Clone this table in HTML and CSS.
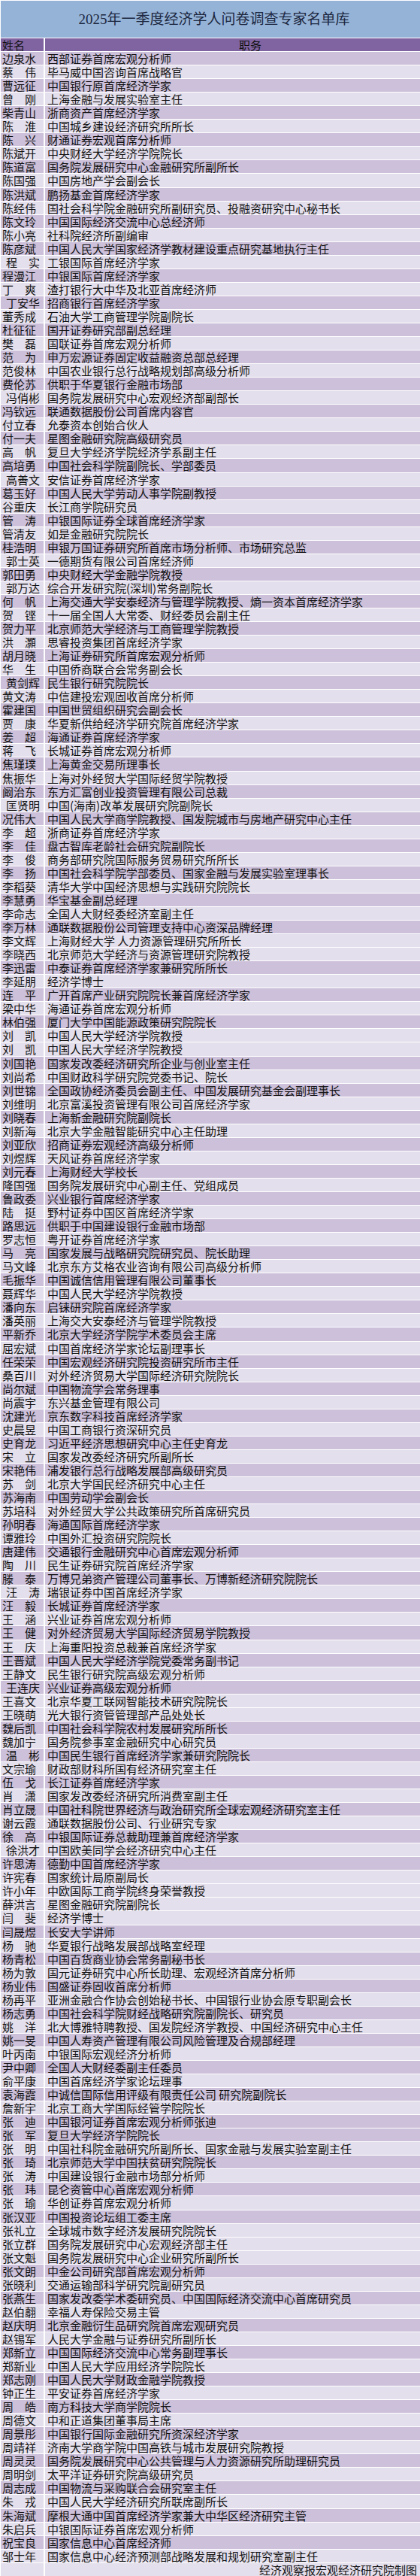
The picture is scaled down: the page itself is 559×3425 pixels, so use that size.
FILE: index.html
```html
<!DOCTYPE html>
<html lang="zh-CN">
<head>
<meta charset="utf-8">
<title>2025年一季度经济学人问卷调查专家名单库</title>
<link rel="stylesheet" href="styles.css">
</head>
<body>
<div class="sheet">
<div class="title">2025年一季度经济学人问卷调查专家名单库</div>
<div class="row head"><div class="name">姓名</div><div class="job jobhead">职务</div></div>
<div class="row d"><div class="name">边泉水</div><div class="job">西部证券首席宏观分析师</div></div>
<div class="row l"><div class="name">蔡　伟</div><div class="job">毕马威中国咨询首席战略官</div></div>
<div class="row d"><div class="name">曹远征</div><div class="job">中国银行原首席经济学家</div></div>
<div class="row l"><div class="name">曾　刚</div><div class="job">上海金融与发展实验室主任</div></div>
<div class="row d"><div class="name">柴青山</div><div class="job">浙商资产首席经济学家</div></div>
<div class="row l"><div class="name">陈　淮</div><div class="job">中国城乡建设经济研究所所长</div></div>
<div class="row d"><div class="name">陈　兴</div><div class="job">财通证券宏观首席分析师</div></div>
<div class="row l"><div class="name">陈斌开</div><div class="job">中央财经大学经济学院院长</div></div>
<div class="row d"><div class="name">陈道富</div><div class="job">国务院发展研究中心金融研究所副所长</div></div>
<div class="row l"><div class="name">陈国强</div><div class="job">中国房地产学会副会长</div></div>
<div class="row d"><div class="name">陈洪斌</div><div class="job">鹏扬基金首席经济学家</div></div>
<div class="row l"><div class="name">陈经伟</div><div class="job">国社会科学院金融研究所副研究员、投融资研究中心秘书长</div></div>
<div class="row d"><div class="name">陈文玲</div><div class="job">中国国际经济交流中心总经济师</div></div>
<div class="row l"><div class="name">陈小亮</div><div class="job">社科院经济所副编审</div></div>
<div class="row d"><div class="name">陈彦斌</div><div class="job">中国人民大学国家经济学教材建设重点研究基地执行主任</div></div>
<div class="row l"><div class="name ind">程　实</div><div class="job">工银国际首席经济学家</div></div>
<div class="row d"><div class="name">程漫江</div><div class="job">中银国际首席经济学家</div></div>
<div class="row l"><div class="name">丁　爽</div><div class="job">渣打银行大中华及北亚首席经济师</div></div>
<div class="row d"><div class="name ind">丁安华</div><div class="job">招商银行首席经济学家</div></div>
<div class="row l"><div class="name">董秀成</div><div class="job">石油大学工商管理学院副院长</div></div>
<div class="row d"><div class="name">杜征征</div><div class="job">国开证券研究部副总经理</div></div>
<div class="row l"><div class="name">樊　磊</div><div class="job">国联证券首席宏观分析师</div></div>
<div class="row d"><div class="name">范　为</div><div class="job">申万宏源证券固定收益融资总部总经理</div></div>
<div class="row l"><div class="name">范俊林</div><div class="job">中国农业银行总行战略规划部高级分析师</div></div>
<div class="row d"><div class="name">费伦苏</div><div class="job">供职于华夏银行金融市场部</div></div>
<div class="row l"><div class="name ind">冯俏彬</div><div class="job">国务院发展研究中心宏观经济部副部长</div></div>
<div class="row d"><div class="name">冯钦远</div><div class="job">联通数据股份公司首席内容官</div></div>
<div class="row l"><div class="name">付立春</div><div class="job">允泰资本创始合伙人</div></div>
<div class="row d"><div class="name">付一夫</div><div class="job">星图金融研究院高级研究员</div></div>
<div class="row l"><div class="name">高　帆</div><div class="job">复旦大学经济学院经济学系副主任</div></div>
<div class="row d"><div class="name">高培勇</div><div class="job">中国社会科学院副院长、学部委员</div></div>
<div class="row l"><div class="name ind">高善文</div><div class="job">安信证券首席经济学家</div></div>
<div class="row d"><div class="name">葛玉好</div><div class="job">中国人民大学劳动人事学院副教授</div></div>
<div class="row l"><div class="name">谷重庆</div><div class="job">长江商学院研究员</div></div>
<div class="row d"><div class="name">管　涛</div><div class="job">中银国际证券全球首席经济学家</div></div>
<div class="row l"><div class="name">管清友</div><div class="job">如是金融研究院院长</div></div>
<div class="row d"><div class="name">桂浩明</div><div class="job">申银万国证券研究所首席市场分析师、市场研究总监</div></div>
<div class="row l"><div class="name ind">郭士英</div><div class="job">一德期货有限公司首席经济师</div></div>
<div class="row d"><div class="name">郭田勇</div><div class="job">中央财经大学金融学院教授</div></div>
<div class="row l"><div class="name ind">郭万达</div><div class="job">综合开发研究院(深圳)常务副院长</div></div>
<div class="row d"><div class="name">何　帆</div><div class="job">上海交通大学安泰经济与管理学院教授、熵一资本首席经济学家</div></div>
<div class="row l"><div class="name">贺　铿</div><div class="job">十一届全国人大常委、财经委员会副主任</div></div>
<div class="row d"><div class="name">贺力平</div><div class="job">北京师范大学经济与工商管理学院教授</div></div>
<div class="row l"><div class="name">洪　灝</div><div class="job">思睿投资集团首席经济学家</div></div>
<div class="row d"><div class="name">胡月晓</div><div class="job">上海证券研究所首席宏观分析师</div></div>
<div class="row l"><div class="name">华　生</div><div class="job">中国侨商联合会常务副会长</div></div>
<div class="row d"><div class="name ind">黄剑辉</div><div class="job">民生银行研究院院长</div></div>
<div class="row l"><div class="name">黄文涛</div><div class="job">中信建投宏观固收首席分析师</div></div>
<div class="row d"><div class="name">霍建国</div><div class="job">中国世贸组织研究会副会长</div></div>
<div class="row l"><div class="name">贾　康</div><div class="job">华夏新供给经济学研究院首席经济学家</div></div>
<div class="row d"><div class="name">姜　超</div><div class="job">海通证券首席经济学家</div></div>
<div class="row l"><div class="name">蒋　飞</div><div class="job">长城证券首席宏观分析师</div></div>
<div class="row d"><div class="name">焦瑾璞</div><div class="job">上海黄金交易所理事长</div></div>
<div class="row l"><div class="name">焦振华</div><div class="job">上海对外经贸大学国际经贸学院教授</div></div>
<div class="row d"><div class="name">阚治东</div><div class="job">东方汇富创业投资管理有限公司总裁</div></div>
<div class="row l"><div class="name ind">匡贤明</div><div class="job">中国(海南)改革发展研究院副院长</div></div>
<div class="row d"><div class="name">况伟大</div><div class="job">中国人民大学商学院教授、国发院城市与房地产研究中心主任</div></div>
<div class="row l"><div class="name">李　超</div><div class="job">浙商证券首席经济学家</div></div>
<div class="row d"><div class="name">李　佳</div><div class="job">盘古智库老龄社会研究院副院长</div></div>
<div class="row l"><div class="name">李　俊</div><div class="job">商务部研究院国际服务贸易研究所所长</div></div>
<div class="row d"><div class="name">李　扬</div><div class="job">中国社会科学院学部委员、国家金融与发展实验室理事长</div></div>
<div class="row l"><div class="name">李稻葵</div><div class="job">清华大学中国经济思想与实践研究院院长</div></div>
<div class="row d"><div class="name">李慧勇</div><div class="job">华宝基金副总经理</div></div>
<div class="row l"><div class="name">李命志</div><div class="job">全国人大财经委经济室副主任</div></div>
<div class="row d"><div class="name">李万林</div><div class="job">通联数据股份公司管理支持中心资深品牌经理</div></div>
<div class="row l"><div class="name">李文辉</div><div class="job">上海财经大学 人力资源管理研究所所长</div></div>
<div class="row l"><div class="name">李晓西</div><div class="job">北京师范大学经济与资源管理研究院教授</div></div>
<div class="row d"><div class="name">李迅雷</div><div class="job">中泰证券首席经济学家兼研究所所长</div></div>
<div class="row l"><div class="name">李延朋</div><div class="job">经济学博士</div></div>
<div class="row d"><div class="name">连　平</div><div class="job">广开首席产业研究院院长兼首席经济学家</div></div>
<div class="row l"><div class="name">梁中华</div><div class="job">海通证券首席宏观分析师</div></div>
<div class="row d"><div class="name">林伯强</div><div class="job">厦门大学中国能源政策研究院院长</div></div>
<div class="row l"><div class="name">刘　凯</div><div class="job">中国人民大学经济学院教授</div></div>
<div class="row l"><div class="name">刘　凯</div><div class="job">中国人民大学经济学院教授</div></div>
<div class="row d"><div class="name">刘国艳</div><div class="job">国家发改委经济研究所企业与创业室主任</div></div>
<div class="row l"><div class="name">刘尚希</div><div class="job">中国财政科学研究院党委书记、院长</div></div>
<div class="row d"><div class="name">刘世锦</div><div class="job">全国政协经济委员会副主任、中国发展研究基金会副理事长</div></div>
<div class="row l"><div class="name">刘维明</div><div class="job">北京富溪投资管理有限公司首席经济学家</div></div>
<div class="row d"><div class="name">刘晓春</div><div class="job">上海新金融研究院副院长</div></div>
<div class="row l"><div class="name">刘新海</div><div class="job">北京大学金融智能研究中心主任助理</div></div>
<div class="row d"><div class="name">刘亚欣</div><div class="job">招商证券宏观经济高级分析师</div></div>
<div class="row l"><div class="name">刘煜辉</div><div class="job">天风证券首席经济学家</div></div>
<div class="row d"><div class="name">刘元春</div><div class="job">上海财经大学校长</div></div>
<div class="row l"><div class="name">隆国强</div><div class="job">国务院发展研究中心副主任、党组成员</div></div>
<div class="row d"><div class="name">鲁政委</div><div class="job">兴业银行首席经济学家</div></div>
<div class="row l"><div class="name">陆　挺</div><div class="job">野村证券中国区首席经济学家</div></div>
<div class="row d"><div class="name">路思远</div><div class="job">供职于中国建设银行金融市场部</div></div>
<div class="row l"><div class="name">罗志恒</div><div class="job">粤开证券首席经济学家</div></div>
<div class="row d"><div class="name">马　亮</div><div class="job">国家发展与战略研究院研究员、院长助理</div></div>
<div class="row l"><div class="name">马文峰</div><div class="job">北京东方艾格农业咨询有限公司高级分析师</div></div>
<div class="row d"><div class="name">毛振华</div><div class="job">中国诚信信用管理有限公司董事长</div></div>
<div class="row l"><div class="name">聂辉华</div><div class="job">中国人民大学经济学院教授</div></div>
<div class="row d"><div class="name">潘向东</div><div class="job">启铼研究院首席经济学家</div></div>
<div class="row l"><div class="name">潘英丽</div><div class="job">上海交大安泰经济与管理学院教授</div></div>
<div class="row d"><div class="name">平新乔</div><div class="job">北京大学经济学院学术委员会主席</div></div>
<div class="row l"><div class="name">屈宏斌</div><div class="job">中国首席经济学家论坛副理事长</div></div>
<div class="row d"><div class="name">任荣荣</div><div class="job">中国宏观经济研究院投资研究所市主任</div></div>
<div class="row l"><div class="name">桑百川</div><div class="job">对外经济贸易大学国际经济研究院院长</div></div>
<div class="row d"><div class="name">尚尔斌</div><div class="job">中国物流学会常务理事</div></div>
<div class="row l"><div class="name">尚震宇</div><div class="job">东兴基金管理有限公司</div></div>
<div class="row d"><div class="name">沈建光</div><div class="job">京东数字科技首席经济学家</div></div>
<div class="row l"><div class="name">史晨昱</div><div class="job">中国工商银行资深研究员</div></div>
<div class="row d"><div class="name">史育龙</div><div class="job">习近平经济思想研究中心主任史育龙</div></div>
<div class="row l"><div class="name">宋　立</div><div class="job">国家发改委经济研究所副所长</div></div>
<div class="row d"><div class="name">宋艳伟</div><div class="job">浦发银行总行战略发展部高级研究员</div></div>
<div class="row l"><div class="name">苏　剑</div><div class="job">北京大学国民经济研究中心主任</div></div>
<div class="row d"><div class="name">苏海南</div><div class="job">中国劳动学会副会长</div></div>
<div class="row l"><div class="name">苏培科</div><div class="job">对外经贸大学公共政策研究所首席研究员</div></div>
<div class="row d"><div class="name">孙明春</div><div class="job">海通国际首席经济学家</div></div>
<div class="row l"><div class="name">谭雅玲</div><div class="job">中国外汇投资研究院院长</div></div>
<div class="row d"><div class="name">唐建伟</div><div class="job">交通银行金融研究中心首席宏观分析师</div></div>
<div class="row l"><div class="name">陶　川</div><div class="job">民生证券研究院首席经济学家</div></div>
<div class="row d"><div class="name">滕　泰</div><div class="job">万博兄弟资产管理公司董事长、万博新经济研究院院长</div></div>
<div class="row l"><div class="name ind">汪　涛</div><div class="job">瑞银证券中国首席经济学家</div></div>
<div class="row d"><div class="name">汪　毅</div><div class="job">长城证券首席经济学家</div></div>
<div class="row l"><div class="name">王　涵</div><div class="job">兴业证券首席宏观分析师</div></div>
<div class="row d"><div class="name">王　健</div><div class="job">对外经济贸易大学国际经济贸易学院教授</div></div>
<div class="row l"><div class="name">王　庆</div><div class="job">上海重阳投资总裁兼首席经济学家</div></div>
<div class="row d"><div class="name">王晋斌</div><div class="job">中国人民大学经济学院党委常务副书记</div></div>
<div class="row l"><div class="name">王静文</div><div class="job">民生银行研究院高级宏观分析师</div></div>
<div class="row d"><div class="name ind">王连庆</div><div class="job">兴业证券高级宏观分析师</div></div>
<div class="row l"><div class="name">王喜文</div><div class="job">北京华夏工联网智能技术研究院院长</div></div>
<div class="row l"><div class="name">王晓萌</div><div class="job">光大银行资管管理部产品处处长</div></div>
<div class="row d"><div class="name">魏后凯</div><div class="job">中国社会科学院农村发展研究所所长</div></div>
<div class="row l"><div class="name">魏加宁</div><div class="job">国务院参事室金融研究中心研究员</div></div>
<div class="row d"><div class="name ind">温　彬</div><div class="job">中国民生银行首席经济学家兼研究院院长</div></div>
<div class="row l"><div class="name">文宗瑜</div><div class="job">财政部财科所国有经济研究室主任</div></div>
<div class="row d"><div class="name">伍　戈</div><div class="job">长江证券首席经济学家</div></div>
<div class="row l"><div class="name">肖　潇</div><div class="job">国家发改委经济研究所消费室副主任</div></div>
<div class="row d"><div class="name">肖立晟</div><div class="job">中国社科院世界经济与政治研究所全球宏观经济研究室主任</div></div>
<div class="row l"><div class="name">谢云霞</div><div class="job">通联数据股份公司、行业研究专家</div></div>
<div class="row d"><div class="name">徐　高</div><div class="job">中银国际证券总裁助理兼首席经济学家</div></div>
<div class="row l"><div class="name ind">徐洪才</div><div class="job">中国欧美同学会经济研究中心主任</div></div>
<div class="row d"><div class="name">许思涛</div><div class="job">德勤中国首席经济学家</div></div>
<div class="row l"><div class="name">许宪春</div><div class="job">国家统计局原副局长</div></div>
<div class="row l"><div class="name">许小年</div><div class="job">中欧国际工商学院终身荣誉教授</div></div>
<div class="row l"><div class="name">薛洪言</div><div class="job">星图金融研究院副院长</div></div>
<div class="row l"><div class="name">闫　斐</div><div class="job">经济学博士</div></div>
<div class="row d"><div class="name">闫晟煜</div><div class="job">长安大学讲师</div></div>
<div class="row l"><div class="name">杨　驰</div><div class="job">华夏银行战略发展部战略室经理</div></div>
<div class="row d"><div class="name">杨青松</div><div class="job">中国百货商业协会常务副秘书长</div></div>
<div class="row l"><div class="name">杨为敦</div><div class="job">国元证券研究中心所长助理、宏观经济首席分析师</div></div>
<div class="row d"><div class="name">杨业伟</div><div class="job">国盛证券固收首席分析师</div></div>
<div class="row l"><div class="name">杨再平</div><div class="job">亚洲金融合作协会创始秘书长、中国银行业协会原专职副会长</div></div>
<div class="row d"><div class="name">杨志勇</div><div class="job">中国社会科学院财经战略研究院副院长、研究员</div></div>
<div class="row l"><div class="name">姚　洋</div><div class="job">北大博雅特聘教授、国发院经济学教授、中国经济研究中心主任</div></div>
<div class="row d"><div class="name">姚一旻</div><div class="job">中国人寿资产管理有限公司风险管理及合规部经理</div></div>
<div class="row l"><div class="name">叶丙南</div><div class="job">中银国际宏观经济分析师</div></div>
<div class="row d"><div class="name">尹中卿</div><div class="job">全国人大财经委副主任委员</div></div>
<div class="row l"><div class="name">俞平康</div><div class="job">中国首席经济学家论坛理事</div></div>
<div class="row d"><div class="name">袁海霞</div><div class="job">中诚信国际信用评级有限责任公司 研究院副院长</div></div>
<div class="row l"><div class="name">詹新宇</div><div class="job">北京工商大学国际经管学院院长</div></div>
<div class="row d"><div class="name">张　迪</div><div class="job">中国银河证券首席宏观分析师张迪</div></div>
<div class="row d"><div class="name">张　军</div><div class="job">复旦大学经济学院院长</div></div>
<div class="row l"><div class="name">张　明</div><div class="job">中国社科院金融研究所副所长、国家金融与发展实验室副主任</div></div>
<div class="row d"><div class="name">张　琦</div><div class="job">北京师范大学中国扶贫研究院院长</div></div>
<div class="row l"><div class="name">张　涛</div><div class="job">中国建设银行金融市场部分析师</div></div>
<div class="row d"><div class="name">张　玮</div><div class="job">昆仑资管中心首席宏观分析师</div></div>
<div class="row l"><div class="name">张　瑜</div><div class="job">华创证券首席宏观分析师</div></div>
<div class="row d"><div class="name">张汉亚</div><div class="job">中国投资论坛组工委主席</div></div>
<div class="row l"><div class="name">张礼立</div><div class="job">全球城市数字经济发展研究院院长</div></div>
<div class="row l"><div class="name">张立群</div><div class="job">国务院发展研究中心宏观经济部主任</div></div>
<div class="row l"><div class="name">张文魁</div><div class="job">国务院发展研究中心企业研究所副所长</div></div>
<div class="row d"><div class="name">张文朗</div><div class="job">中金公司研究部首席宏观分析师</div></div>
<div class="row l"><div class="name">张晓利</div><div class="job">交通运输部科学研究院副研究员</div></div>
<div class="row d"><div class="name">张燕生</div><div class="job">国家发改委学术委研究员、中国国际经济交流中心首席研究员</div></div>
<div class="row l"><div class="name">赵伯翿</div><div class="job">幸福人寿保险交易主管</div></div>
<div class="row d"><div class="name">赵庆明</div><div class="job">北京金融衍生品研究院首席宏观研究员</div></div>
<div class="row l"><div class="name">赵锡军</div><div class="job">人民大学金融与证券研究所副所长</div></div>
<div class="row d"><div class="name">郑新立</div><div class="job">中国国际经济交流中心常务副理事长</div></div>
<div class="row l"><div class="name">郑新业</div><div class="job">中国人民大学应用经济学院院长</div></div>
<div class="row d"><div class="name">郑志刚</div><div class="job">中国人民大学财政金融学院教授</div></div>
<div class="row l"><div class="name">钟正生</div><div class="job">平安证券首席经济学家</div></div>
<div class="row d"><div class="name">周　皓</div><div class="job">南方科技大学商学院院长</div></div>
<div class="row l"><div class="name">周德文</div><div class="job">中和正道集团董事局主席</div></div>
<div class="row d"><div class="name">周景彤</div><div class="job">中国银行国际金融研究所资深经济学家</div></div>
<div class="row l"><div class="name">周靖祥</div><div class="job">济南大学商学院中国高铁与城市发展研究院教授</div></div>
<div class="row d"><div class="name">周灵灵</div><div class="job">国务院发展研究中心公共管理与人力资源研究所助理研究员</div></div>
<div class="row l"><div class="name">周明剑</div><div class="job">太平洋证券研究院高级研究员</div></div>
<div class="row d"><div class="name">周志成</div><div class="job">中国物流与采购联合会研究室主任</div></div>
<div class="row l"><div class="name">朱　戎</div><div class="job">中国人民大学经济研究所联席副所长</div></div>
<div class="row d"><div class="name">朱海斌</div><div class="job">摩根大通中国首席经济学家兼大中华区经济研究主管</div></div>
<div class="row l"><div class="name">朱启兵</div><div class="job">中银国际证券首席宏观分析师</div></div>
<div class="row d"><div class="name">祝宝良</div><div class="job">国家信息中心首席经济师</div></div>
<div class="row l"><div class="name">邹士年</div><div class="job">国家信息中心经济预测部战略发展和规划研究室副主任</div></div>
<div class="row l"><div class="name"></div><div class="job credit">经济观察报宏观经济研究院制图</div></div>
</div>
</body>
</html>
```
FILE: styles.css
```css
html, body {
  margin: 0;
  padding: 0;
  background: #ffffff;
}

body {
  font-family: "Noto Sans CJK SC", "Noto Sans", sans-serif;
  color: #111111;
}

.sheet {
  width: 559px;
  box-sizing: border-box;
  padding: 1px 0 0 1px;
  display: flex;
  flex-direction: column;
}

.title {
  height: 49px;
  background: #95b3d7;
  display: flex;
  align-items: center;
  justify-content: center;
  font-family: "Liberation Serif", "Noto Sans CJK SC", serif;
  font-size: 19px;
  line-height: 24px;
  color: #1c2740;
  padding-left: 10px;
}

.row {
  display: grid;
  grid-template-columns: 57px 1fr;
  column-gap: 2px;
  height: 17.05px;
  margin-top: 1px;
}

.row > div {
  font-size: 15px;
  line-height: 17px;
  white-space: pre;
  padding-left: 2px;
  min-width: 0;
}

.row .job {
  padding-left: 3px;
}

.row .name.ind {
  padding-left: 7px;
}

.head > div {
  background: #8064a2;
}

.row .jobhead {
  padding-left: 258px;
}

.d > div {
  background: #ccc0da;
}

.l > div {
  background: #e4dfec;
}

.row .credit {
  text-align: right;
  padding-right: 4px;
}
```
